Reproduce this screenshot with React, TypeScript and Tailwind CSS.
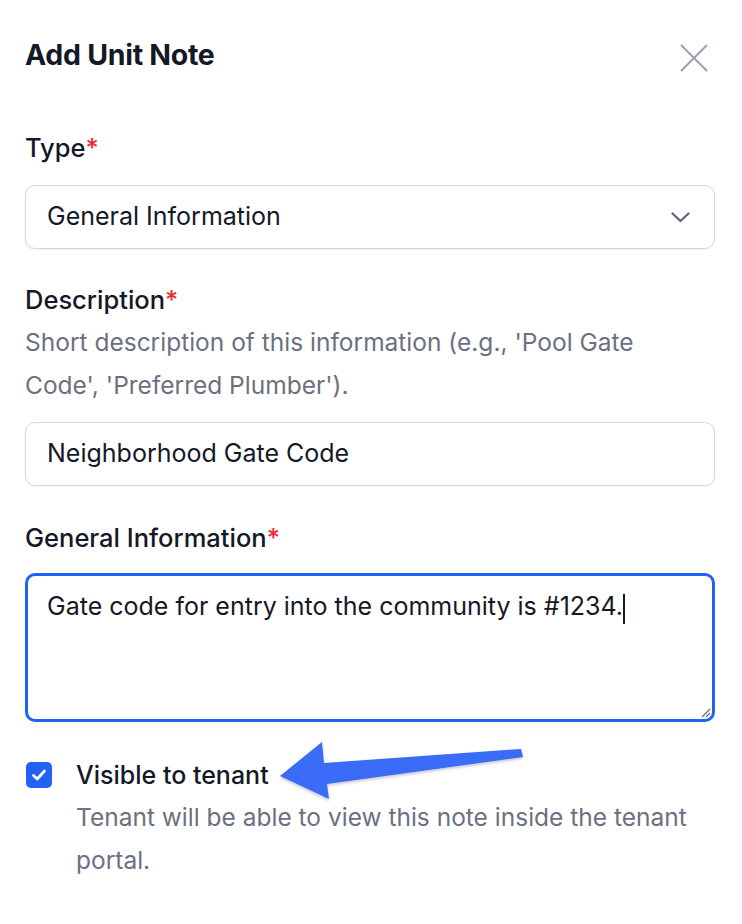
const font = { fontFamily: "Inter, 'Noto Sans', sans-serif" };

function Label({ text }: { text: string }) {
  return (
    <div className="text-[25.5px] leading-[36px] font-medium text-[#141827]">
      {text}
      <span className="text-[#ef2b3a]">*</span>
    </div>
  );
}

export default function App() {
  return (
    <div className="relative w-[742px] h-[924px] bg-white overflow-hidden" style={font}>
      <div className="flex flex-col pl-[25px] pr-[27px] pt-[37px]">
        {/* header */}
        <div className="flex items-center justify-between">
          <h2 className="text-[28.5px] leading-[36px] font-bold text-[#141827] tracking-[-0.01em]">
            Add Unit Note
          </h2>
          <button className="mr-[7px] mt-[6px]">
            <svg width="28" height="28" viewBox="0 0 28 28" fill="none">
              <path d="M1 1 L27 27 M27 1 L1 27" stroke="#9aa1ad" strokeWidth="2" />
            </svg>
          </button>
        </div>

        {/* type */}
        <div className="mt-[57px]">
          <Label text="Type" />
        </div>
        <div className="mt-[19px] h-[64px] flex items-center justify-between border border-[#d4d7dd] rounded-[10px] pl-[21px] pr-[24px] shadow-[0_1px_2px_rgba(0,0,0,0.06)]">
          <span className="text-[25px] text-[#141827]">General Information</span>
          <svg width="19" height="11" viewBox="0 0 19 11" fill="none">
            <path d="M1.5 1.5 L9.5 9 L17.5 1.5" stroke="#5d6474" strokeWidth="2.2" strokeLinecap="round" strokeLinejoin="round" />
          </svg>
        </div>

        {/* description */}
        <div className="mt-[33px]">
          <Label text="Description" />
        </div>
        <p className="mt-[3px] text-[24.5px] leading-[43px] text-[#6b7180] pr-[40px]">
          Short description of this information (e.g., 'Pool Gate Code', 'Preferred Plumber').
        </p>
        <div className="mt-[15px] h-[64px] flex items-center border border-[#d4d7dd] rounded-[10px] pl-[21px] shadow-[0_1px_2px_rgba(0,0,0,0.06)]">
          <span className="text-[25px] text-[#141827]">Neighborhood Gate Code</span>
        </div>

        {/* general information */}
        <div className="mt-[34px]">
          <Label text="General Information" />
        </div>
        <div className="relative mt-[17px] h-[149px] border-[3px] border-[#1f63f4] rounded-[10px] pl-[19px] pt-[12px]">
          <span className="text-[25px] leading-[36px] text-[#141827]">
            Gate code for entry into the community is #1234.
          </span>
          <span className="inline-block align-middle w-[2px] h-[30px] bg-[#141827] -mt-[4px]" />
          <svg className="absolute right-[1px] bottom-[1px]" width="12" height="12" viewBox="0 0 12 12">
            <path d="M11 3 L3 11 M11 7 L7 11" stroke="#6b6b6b" strokeWidth="1.2" />
          </svg>
        </div>

        {/* visible to tenant */}
        <div className="mt-[35px] flex items-center gap-[24px]">
          <div className="w-[26px] h-[26px] ml-[1px] rounded-[5px] bg-[#2162f3] flex items-center justify-center">
            <svg width="18" height="18" viewBox="0 0 18 18" fill="none">
              <path d="M3.5 9.5 L7.2 13 L14.5 5" stroke="white" strokeWidth="2.8" strokeLinecap="round" strokeLinejoin="round" />
            </svg>
          </div>
          <span className="text-[25px] leading-[36px] font-medium text-[#141827]">
            Visible to tenant
          </span>
        </div>
        <p className="mt-[3px] ml-[51px] text-[24.5px] leading-[43px] text-[#6b7180]">
          Tenant will be able to view this note inside the tenant portal.
        </p>
      </div>

      {/* annotation arrow */}
      <svg className="absolute left-0 top-0 pointer-events-none" width="742" height="924" viewBox="0 0 742 924">
        <defs>
          <filter id="sh" x="-10%" y="-30%" width="120%" height="160%">
            <feDropShadow dx="0" dy="1.5" stdDeviation="1.5" floodColor="#000" floodOpacity="0.25" />
          </filter>
        </defs>
        <polygon
          points="280,776 322,742 324,763 521,749 523,757 327,784 329,799"
          fill="#3b6cf7"
          filter="url(#sh)"
        />
      </svg>
    </div>
  );
}
